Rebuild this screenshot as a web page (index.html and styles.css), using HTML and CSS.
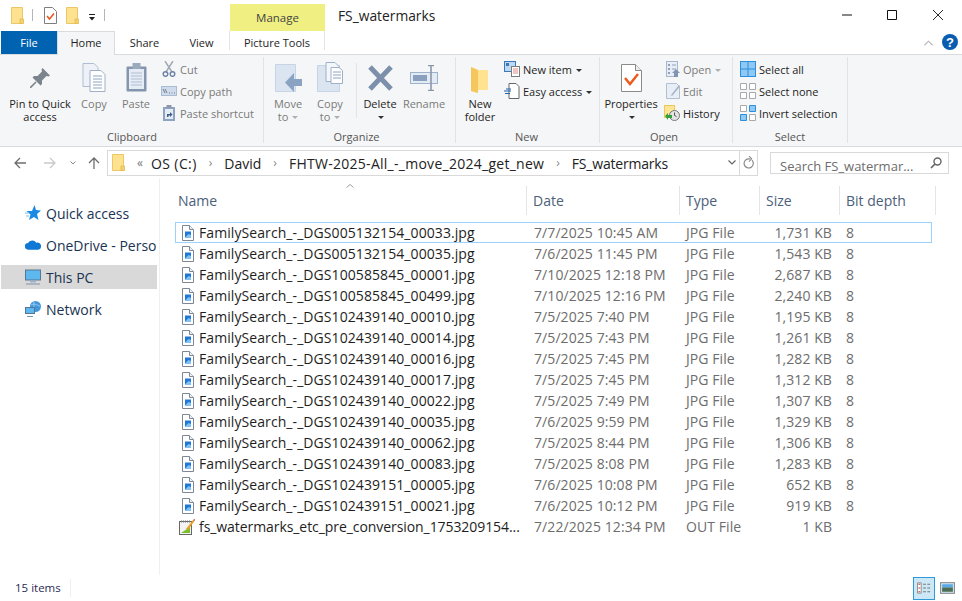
FILE: index.html
```html
<!DOCTYPE html>
<html>
  <head>
    <title>FS_watermarks</title>
    <link rel="stylesheet" href="styles.css">
  </head>
  <body>
    <svg class="defs" width="0" height="0">
      <symbol id="folder" viewBox="0 0 13 17">
        <path d="M.5.5h11v16H.5z" fill="#ffe28f" stroke="#ecc765"/>
        <path d="M9 12h3.500v4.500H9z" fill="#f4d271" stroke="#e3b94e" stroke-width=".8"/>
      </symbol>
      <symbol id="checkdoc" viewBox="0 0 13 17">
        <path d="M.5.5h8l4 4v12H.5z" fill="#fff" stroke="#7f7f7f"/>
        <path d="M3 9l2.500 3L10 6.500" fill="none" stroke="#e8541d" stroke-width="1.500"/>
      </symbol>
      <symbol id="jpg" viewBox="0 0 12 16">
        <path d="M.5.500h7l4 4v11H.500z" fill="#fff" stroke="#7e8794"/>
        <path d="M7.500.500v4h4" fill="#eef1f5" stroke="#7e8794"/>
        <rect x="3" y="6.500" width="6" height="6" fill="#1f78d8"/>
        <path d="M3 12.500l3.500-3.500 2.500 1v2.500z" fill="#7fc2f4"/>
      </symbol>
    </svg>

    <header class="titlebar">
      <div class="qat">
        <svg class="qat-icon"><use href="#folder"/></svg>
        <span class="qat-sep"></span>
        <svg class="qat-icon"><use href="#checkdoc"/></svg>
        <svg class="qat-icon qat-gap"><use href="#folder"/></svg>
        <svg class="qat-drop" viewBox="0 0 8 7"><path d="M1 .5h6" stroke="#222"/><path d="M1 3h6L4 6.500z" fill="#222"/></svg>
        <span class="qat-sep qat-sep-last"></span>
      </div>
      <div class="manage">Manage</div>
      <div class="window-title">FS_watermarks</div>
      <div class="window-controls">
        <svg viewBox="0 0 10 10" class="ctl-min"><path d="M0 5h10" stroke="#111"/></svg>
        <svg viewBox="0 0 10 10" class="ctl-max"><path d="M.5.500h9v9h-9z" fill="none" stroke="#111"/></svg>
        <svg viewBox="0 0 10 10" class="ctl-close"><path d="M0 0l10 10M10 0L0 10" stroke="#111" stroke-width=".9"/></svg>
      </div>
    </header>

    <nav class="tabs">
      <div class="tab tab-file">File</div>
      <div class="tab tab-home">Home</div>
      <div class="tab tab-share">Share</div>
      <div class="tab tab-view">View</div>
      <div class="tab tab-tools">Picture Tools</div>
      <svg class="ribbon-up" viewBox="0 0 10 6"><path d="M.5 5.500L5 1l4.500 4.500" fill="none" stroke="#b5b5b5" stroke-width="1.200"/></svg>
      <svg class="help" viewBox="0 0 16 16"><circle cx="8" cy="8" r="8" fill="#0a5cb0"/><text x="8" y="12.500" text-anchor="middle" class="help-q">?</text></svg>
    </nav>

    <section class="ribbon">
      <div class="group group-clipboard">
        <div class="group-body">
          <div class="big big-pin">
            <svg viewBox="0 0 20 20"><path d="M12.500 0L20 7.500l-1.500 1-2-.5-4.500 4.500V16l-1.500 1.500-8-8L4 8h3.500L12 3.500l-.5-2z" fill="#7c858e"/><path d="M6 14l-6 6" stroke="#7c858e" stroke-width="1.600"/></svg>
            <span>Pin to Quick<br>access</span>
          </div>
          <div class="big big-copy dim">
            <svg viewBox="0 0 24 29"><path d="M1 .5h11l4 4v19H1z" fill="#eef2f8" stroke="#aebdd2"/><path d="M8 7.500h11l4 4v17H8z" fill="#fff" stroke="#9fb0c8"/><path d="M11 13h9M11 16h9M11 19h9M11 22h9M11 25h9" stroke="#8ea4c2"/></svg>
            <span>Copy</span>
          </div>
          <div class="big big-paste dim">
            <svg viewBox="0 0 21 29"><rect x=".5" y="3.500" width="20" height="25" rx="1" fill="#8496ad"/><rect x="3" y="6" width="15" height="20" fill="#e6ecf5"/><path d="M5 10h11M5 13h11M5 16h11M5 19h11M5 22h11" stroke="#aebdd2"/><rect x="6.500" y="0" width="8" height="6" fill="#9aa9bb"/></svg>
            <span>Paste</span>
          </div>
          <div class="small-col col-cut">
            <div class="small dim">
              <svg viewBox="0 0 16 16"><path d="M4 0l7 11M12 0L5 11" stroke="#a3aab5" stroke-width="1.500"/><circle cx="4.500" cy="13" r="2.300" fill="none" stroke="#6f86a8" stroke-width="1.500"/><circle cx="11.500" cy="13" r="2.300" fill="none" stroke="#6f86a8" stroke-width="1.500"/></svg>
              <span>Cut</span>
            </div>
            <div class="small dim">
              <svg viewBox="0 0 16 16"><rect x=".5" y="3.500" width="15" height="9" fill="#cfdbec" stroke="#a9bbd4"/><path d="M2 6l2 4M4 6l2 4M8 10h1M10.500 10h1M13 10h1" stroke="#556666" stroke-width=".8"/></svg>
              <span>Copy path</span>
            </div>
            <div class="small dim">
              <svg viewBox="0 0 16 16"><rect x="2" y="2" width="12" height="14" fill="#8da3bf"/><rect x="4" y="4" width="8" height="10" fill="#e6ecf5"/><rect x="5.500" y="0" width="5" height="3" fill="#8c98a8"/><path d="M6 12V9h3V7l2.500 2.500L9 12v-1.500H7.500V12z" fill="#3f5f8a"/></svg>
              <span>Paste shortcut</span>
            </div>
          </div>
        </div>
        <div class="group-name">Clipboard</div>
      </div>

      <div class="group group-organize">
        <div class="group-body">
          <div class="big big-move dim">
            <svg viewBox="0 0 27 28"><path d="M.5.500h20v27H.5z" fill="#dbe5f2" stroke="#c6d4e6"/><path d="M19 15h8v7h-8v6l-9-9.500L19 9z" fill="#8aa3c3"/></svg>
            <span>Move<br>to <i class="caret"></i></span>
          </div>
          <div class="big big-copyto dim">
            <svg viewBox="0 0 26 30"><path d="M.5 3.500h22v26H.5z" fill="#dbe5f2" stroke="#c6d4e6"/><path d="M9 .5h9l4 4v15H9z" fill="#f3f6fa" stroke="#9fb0c8"/><path d="M14 5.500h8l3.500 3v13H14z" fill="#fff" stroke="#9fb0c8"/><path d="M16 10h8M16 13h8M16 16h8" stroke="#8ea4c2"/></svg>
            <span>Copy<br>to <i class="caret"></i></span>
          </div>
          <span class="inner-sep"></span>
          <div class="big big-delete">
            <svg viewBox="0 0 25 26"><path d="M2 2l21 22M23 2L2 24" stroke="#7d90ab" stroke-width="5"/></svg>
            <span>Delete<br><i class="caret caret-dark"></i></span>
          </div>
          <div class="big big-rename dim">
            <svg viewBox="0 0 28 26"><rect x=".5" y="7.500" width="27" height="11" fill="#e3ebf5" stroke="#9fb2cc"/><rect x="3" y="10" width="14" height="6" fill="#8aa0be"/><path d="M18 .5h6M18 25.500h6M21 1v24" stroke="#8b98aa" stroke-width="1.600"/></svg>
            <span>Rename</span>
          </div>
        </div>
        <div class="group-name">Organize</div>
      </div>

      <div class="group group-new">
        <div class="group-body">
          <div class="big big-folder">
            <svg viewBox="0 0 18 27"><path d="M0 1l7 3h10v20H7v3l-7-2z" fill="#ffe391"/><path d="M0 1l7 3v23l-7-2z" fill="#f4c65b"/></svg>
            <span>New<br>folder</span>
          </div>
          <div class="small-col col-newitem">
            <div class="small">
              <svg viewBox="0 0 16 16"><rect x=".5" y=".5" width="11" height="10" fill="#bcd8f2" stroke="#3b78b8"/><rect x="2" y="2" width="3" height="3" fill="#3b78b8"/><rect x="7.500" y="5.500" width="8" height="10" fill="#fff" stroke="#7b7b7b"/><path d="M9 8h5M9 10h5M9 12h5" stroke="#d9534f" stroke-width=".7"/></svg>
              <span>New item <i class="caret caret-dark"></i></span>
            </div>
            <div class="small">
              <svg viewBox="0 0 16 16"><path d="M5 .5h7l3 3v12H5z" fill="#fff" stroke="#666"/><path d="M0 8h7M1 10.500h5M2 6h5" stroke="#1a62b0" stroke-width="1.100"/></svg>
              <span>Easy access <i class="caret caret-dark"></i></span>
            </div>
          </div>
        </div>
        <div class="group-name">New</div>
      </div>

      <div class="group group-open">
        <div class="group-body">
          <div class="big big-props">
            <svg viewBox="0 0 21 28"><path d="M.5.500h14l6 6v21H.5z" fill="#fff" stroke="#8a8a8a"/><path d="M14.500.500v6h6" fill="#eee" stroke="#8a8a8a"/><path d="M4 14l5 6 8-10" fill="none" stroke="#ec5a1c" stroke-width="2.400"/></svg>
            <span>Properties<br><i class="caret caret-dark"></i></span>
          </div>
          <div class="small-col col-open">
            <div class="small dim">
              <svg viewBox="0 0 16 16"><rect x="2.500" y=".5" width="11" height="15" fill="#e9eef6" stroke="#a8b7cc"/><path d="M4 3h2v2H4zM4 7h2v2H4zM4 11h2v2H4z" fill="#8ea2bc"/><path d="M8 4h4M8 8h4" stroke="#8ea2bc"/><path d="M12 8l4 4h-2v4h-4v-4H8z" fill="#7f95b3"/></svg>
              <span>Open <i class="caret"></i></span>
            </div>
            <div class="small dim">
              <svg viewBox="0 0 16 16"><path d="M2.500.500h10l3 3v12h-13z" fill="#e9eef6" stroke="#b1bfd2"/><path d="M7 12l8-10 1 1.500L8 13z" fill="#a3b3c8"/></svg>
              <span>Edit</span>
            </div>
            <div class="small">
              <svg viewBox="0 0 16 16"><rect x=".5" y=".5" width="10" height="12" fill="#ffe596" stroke="#ebc75c"/><circle cx="10.500" cy="10.500" r="5" fill="#e4e4e4" stroke="#777"/><path d="M10.500 7.500v3l2 1" fill="none" stroke="#555"/><path d="M1 11l3-3v2h4v3H4v2z" fill="#32a03c"/></svg>
              <span>History</span>
            </div>
          </div>
        </div>
        <div class="group-name">Open</div>
      </div>

      <div class="group group-select">
        <div class="group-body">
          <div class="small-col col-select">
            <div class="small">
              <svg viewBox="0 0 16 16"><rect x=".5" y=".5" width="15" height="15" fill="#8fc8f5" stroke="#2a8fdc"/><path d="M8 0v16M0 8h16" stroke="#2a8fdc"/></svg>
              <span>Select all</span>
            </div>
            <div class="small">
              <svg viewBox="0 0 16 16"><path d="M.5.500h6v6h-6zM9.500.500h6v6h-6zM.5 9.500h6v6h-6zM9.500 9.500h6v6h-6z" fill="#fff" stroke="#a9a9a9"/></svg>
              <span>Select none</span>
            </div>
            <div class="small">
              <svg viewBox="0 0 16 16"><path d="M.5.500h6v6h-6zM9.500 9.500h6v6h-6z" fill="#fff" stroke="#a9a9a9"/><path d="M9.500.500h6v6h-6zM.5 9.500h6v6h-6z" fill="#8fc8f5" stroke="#2a8fdc"/></svg>
              <span>Invert selection</span>
            </div>
          </div>
        </div>
        <div class="group-name">Select</div>
      </div>
    </section>

    <div class="addressbar">
      <svg class="nav-back" viewBox="0 0 12 12"><path d="M12 6H1M6 1L1 6l5 5" fill="none" stroke="#6d6d6d" stroke-width="1.300"/></svg>
      <svg class="nav-fwd" viewBox="0 0 12 12"><path d="M0 6h11M6 1l5 5-5 5" fill="none" stroke="#c9c9c9" stroke-width="1.300"/></svg>
      <svg class="nav-down" viewBox="0 0 6 4"><path d="M.5.500L3 3 5.500.500" fill="none" stroke="#8a8a8a"/></svg>
      <svg class="nav-up" viewBox="0 0 12 12"><path d="M6 12V1M1 6l5-5 5 5" fill="none" stroke="#6d6d6d" stroke-width="1.300"/></svg>
      <div class="address">
        <svg class="address-folder"><use href="#folder"/></svg>
        <span class="crumb-more">«</span>
        <span class="crumb crumb-os">OS (C:)</span><span class="crumb-sep">›</span>
        <span class="crumb">David</span><span class="crumb-sep">›</span>
        <span class="crumb crumb-long">FHTW-2025-All_-_move_2024_get_new</span><span class="crumb-sep">›</span>
        <span class="crumb crumb-last">FS_watermarks</span>
        <svg class="address-drop" viewBox="0 0 8 5"><path d="M.5.500L4 4 7.500.500" fill="none" stroke="#666" stroke-width="1.200"/></svg>
        <span class="address-refresh">
          <svg viewBox="0 0 12 14"><path d="M9.800 4.500A5 5 0 1 1 6 3h2" fill="none" stroke="#8a8a8a" stroke-width="1.300"/><path d="M6.500 0l3 3-3 3" fill="none" stroke="#8a8a8a" stroke-width="1.100"/></svg>
        </span>
      </div>
      <div class="search">
        <span>Search FS_watermar...</span>
        <svg viewBox="0 0 12 12"><circle cx="7.500" cy="4.500" r="3.500" fill="none" stroke="#666" stroke-width="1.400"/><path d="M5 7l-4 4" stroke="#666" stroke-width="1.700"/></svg>
      </div>
    </div>

    <main class="content">
      <aside class="sidebar">
        <div class="nav-item">
          <svg viewBox="0 0 16 16"><path d="M9.500 0l1.500 5 5 .5-4 3.500 1.500 6-4.500-3-5 3 1.500-5.500L1.500 6H7z" fill="#1a8ae5"/><path d="M0 8h4M1 11h3" stroke="#7ab8ee"/></svg>
          <span>Quick access</span>
        </div>
        <div class="nav-item">
          <svg viewBox="0 0 17 10"><path d="M3.500 10a3.500 3.500 0 0 1-.3-7A5 5 0 0 1 12 2.500a3.800 3.800 0 0 1 5 4A3.500 3.500 0 0 1 14 10z" fill="#0f78d4"/></svg>
          <span>OneDrive - Perso</span>
        </div>
        <div class="nav-item nav-active">
          <svg viewBox="0 0 16 15"><rect x=".5" y=".5" width="15" height="10" fill="#5cb8ee" stroke="#5a7590"/><path d="M5 11h6v2H5z" fill="#9db2c6"/><path d="M1 14.500h14" stroke="#7d93a8"/></svg>
          <span>This PC</span>
        </div>
        <div class="nav-item">
          <svg viewBox="0 0 16 16"><circle cx="10.500" cy="5.500" r="5.500" fill="#3f97dc"/><path d="M6 4c3-2 6 0 9 1M9 1v10" stroke="#a9d7f5" stroke-width=".8" fill="none"/><rect x=".5" y="6.500" width="9" height="6" fill="#5cb8ee" stroke="#5a7590"/><path d="M2 15.500h6" stroke="#7d93a8"/></svg>
          <span>Network</span>
        </div>
      </aside>

      <div class="files">
        <div class="sort-caret"><svg viewBox="0 0 8 4"><path d="M.5 3.500L4 .5l3.500 3" fill="none" stroke="#a0a0a0"/></svg></div>
        <div class="columns">
          <div class="col col-name">Name</div>
          <div class="col col-date">Date</div>
          <div class="col col-type">Type</div>
          <div class="col col-size">Size</div>
          <div class="col col-bits">Bit depth</div>
        </div>
        <div class="rows">
          <div class="row row-focus"><svg class="file-icon"><use href="#jpg"/></svg><span class="name">FamilySearch_-_DGS005132154_00033.jpg</span><span class="date">7/7/2025 10:45 AM</span><span class="type">JPG File</span><span class="size">1,731 KB</span><span class="bits">8</span></div>
          <div class="row"><svg class="file-icon"><use href="#jpg"/></svg><span class="name">FamilySearch_-_DGS005132154_00035.jpg</span><span class="date">7/6/2025 11:45 PM</span><span class="type">JPG File</span><span class="size">1,543 KB</span><span class="bits">8</span></div>
          <div class="row"><svg class="file-icon"><use href="#jpg"/></svg><span class="name">FamilySearch_-_DGS100585845_00001.jpg</span><span class="date">7/10/2025 12:18 PM</span><span class="type">JPG File</span><span class="size">2,687 KB</span><span class="bits">8</span></div>
          <div class="row"><svg class="file-icon"><use href="#jpg"/></svg><span class="name">FamilySearch_-_DGS100585845_00499.jpg</span><span class="date">7/10/2025 12:16 PM</span><span class="type">JPG File</span><span class="size">2,240 KB</span><span class="bits">8</span></div>
          <div class="row"><svg class="file-icon"><use href="#jpg"/></svg><span class="name">FamilySearch_-_DGS102439140_00010.jpg</span><span class="date">7/5/2025 7:40 PM</span><span class="type">JPG File</span><span class="size">1,195 KB</span><span class="bits">8</span></div>
          <div class="row"><svg class="file-icon"><use href="#jpg"/></svg><span class="name">FamilySearch_-_DGS102439140_00014.jpg</span><span class="date">7/5/2025 7:43 PM</span><span class="type">JPG File</span><span class="size">1,261 KB</span><span class="bits">8</span></div>
          <div class="row"><svg class="file-icon"><use href="#jpg"/></svg><span class="name">FamilySearch_-_DGS102439140_00016.jpg</span><span class="date">7/5/2025 7:45 PM</span><span class="type">JPG File</span><span class="size">1,282 KB</span><span class="bits">8</span></div>
          <div class="row"><svg class="file-icon"><use href="#jpg"/></svg><span class="name">FamilySearch_-_DGS102439140_00017.jpg</span><span class="date">7/5/2025 7:45 PM</span><span class="type">JPG File</span><span class="size">1,312 KB</span><span class="bits">8</span></div>
          <div class="row"><svg class="file-icon"><use href="#jpg"/></svg><span class="name">FamilySearch_-_DGS102439140_00022.jpg</span><span class="date">7/5/2025 7:49 PM</span><span class="type">JPG File</span><span class="size">1,307 KB</span><span class="bits">8</span></div>
          <div class="row"><svg class="file-icon"><use href="#jpg"/></svg><span class="name">FamilySearch_-_DGS102439140_00035.jpg</span><span class="date">7/6/2025 9:59 PM</span><span class="type">JPG File</span><span class="size">1,329 KB</span><span class="bits">8</span></div>
          <div class="row"><svg class="file-icon"><use href="#jpg"/></svg><span class="name">FamilySearch_-_DGS102439140_00062.jpg</span><span class="date">7/5/2025 8:44 PM</span><span class="type">JPG File</span><span class="size">1,306 KB</span><span class="bits">8</span></div>
          <div class="row"><svg class="file-icon"><use href="#jpg"/></svg><span class="name">FamilySearch_-_DGS102439140_00083.jpg</span><span class="date">7/5/2025 8:08 PM</span><span class="type">JPG File</span><span class="size">1,283 KB</span><span class="bits">8</span></div>
          <div class="row"><svg class="file-icon"><use href="#jpg"/></svg><span class="name">FamilySearch_-_DGS102439151_00005.jpg</span><span class="date">7/6/2025 10:08 PM</span><span class="type">JPG File</span><span class="size">652 KB</span><span class="bits">8</span></div>
          <div class="row"><svg class="file-icon"><use href="#jpg"/></svg><span class="name">FamilySearch_-_DGS102439151_00021.jpg</span><span class="date">7/6/2025 10:12 PM</span><span class="type">JPG File</span><span class="size">919 KB</span><span class="bits">8</span></div>
          <div class="row"><svg class="file-icon file-out" viewBox="0 0 16 16"><rect x=".5" y="2.500" width="12" height="13" fill="#f4f4f4" stroke="#666"/><path d="M2 14h9V8z" fill="#7ebf2e"/><path d="M2 2.500h9" stroke="#777" stroke-dasharray="1 1" stroke-width="2"/><path d="M7 10l7-9 1.500 1L9 11z" fill="#e8a020"/><path d="M14 1l1.500 1L16 0z" fill="#b02a2a"/></svg><span class="name name-cut">fs_watermarks_etc_pre_conversion_1753209154...</span><span class="date">7/22/2025 12:34 PM</span><span class="type">OUT File</span><span class="size">1 KB</span><span class="bits"></span></div>
        </div>
      </div>
    </main>

    <footer class="statusbar">
      <span class="status-text">15 items</span>
      <div class="views">
        <div class="view-btn view-on">
          <svg viewBox="0 0 16 12"><path d="M.5.500h4v11h-4z" fill="#fff" stroke="#8d8d8d"/><path d="M1.500 2h2M1.500 6h2M1.500 10h2" stroke="#aa3333"/><path d="M6.500 2h3M11 2h3M6.500 6h3M11 6h3M6.500 10h3M11 10h3" stroke="#777" stroke-width="1.200"/></svg>
        </div>
        <div class="view-btn">
          <svg viewBox="0 0 14 11"><rect x=".5" y=".5" width="13" height="10" fill="#cfe4f6" stroke="#8d8d8d"/><rect x="2" y="2" width="10" height="3" fill="#5aaae6"/><rect x="2" y="5" width="10" height="4" fill="#4d6e52"/></svg>
        </div>
      </div>
    </footer>
  </body>
</html>
```

FILE: styles.css
```css
html, body {
  margin: 0;
  height: 601px;
  overflow: hidden;
}

body {
  font-family: "Open Sans", "Noto Sans", sans-serif;
  font-size: 11px;
  color: #1e1e1e;
  background: #fff;
  display: flex;
  flex-direction: column;
}

.defs {
  position: absolute;
}

svg {
  display: block;
  flex: none;
}

/* title row */

.titlebar {
  height: 31px;
  display: flex;
  align-items: flex-end;
}

.qat {
  width: 230px;
  height: 31px;
  padding: 7px 0 0 11px;
  box-sizing: border-box;
  display: flex;
  align-items: flex-start;
}

.qat-icon {
  width: 13px;
  height: 17px;
}

.qat-gap {
  margin-left: 9px;
}

.qat-sep {
  width: 1px;
  height: 12px;
  margin: 2px 11px 0 8px;
  background: #b5b5b5;
}

.qat-sep-last {
  margin-left: 8px;
}

.qat-drop {
  width: 8px;
  height: 7px;
  margin: 7px 0 0 9px;
}

.manage {
  width: 95px;
  height: 27px;
  background: #f0ef82;
  color: #444;
  font-size: 11.500px;
  line-height: 28px;
  text-align: center;
}

.window-title {
  margin-left: 13px;
  align-self: flex-start;
  padding-top: 6px;
  font-size: 13.800px;
  line-height: 20px;
  color: #222;
}

.window-controls {
  margin-left: auto;
  height: 31px;
  display: flex;
  align-items: flex-start;
  padding: 10px 19px 0 0;
  box-sizing: border-box;
}

.window-controls svg {
  width: 10px;
  height: 10px;
}

.ctl-min {
  margin-right: 35px;
}

.ctl-max {
  margin-right: 36px;
}

/* tabs */

.tabs {
  height: 23px;
  display: flex;
  position: relative;
  border-bottom: 1px solid #dadbdc;
  box-sizing: content-box;
}

.tab {
  height: 23px;
  line-height: 23px;
  text-align: center;
  font-size: 11px;
  box-sizing: border-box;
}

.tab-file {
  width: 56px;
  margin-left: 1px;
  line-height: 24px;
  background: #0063b1;
  color: #fff;
}

.tab-home {
  width: 58px;
  height: 24px;
  line-height: 22px;
  border: 1px solid #dadbdc;
  border-bottom: 0;
  background: #f5f6f7;
  position: relative;
}

.tab-share {
  width: 59px;
}

.tab-view {
  width: 55px;
}

.tab-tools {
  width: 96px;
  height: 19px;
  line-height: 24px;
  border: 1px solid #e3e3e3;
  border-top: 0;
  border-bottom: 0;
}

.ribbon-up {
  position: absolute;
  left: 924px;
  top: 9px;
  width: 9px;
  height: 6px;
}

.help {
  position: absolute;
  left: 942px;
  top: 3px;
  width: 16px;
  height: 16px;
}

.help-q {
  font-family: "Liberation Sans", sans-serif;
  font-size: 13px;
  font-weight: bold;
  fill: #fff;
}

/* ribbon */

.ribbon {
  height: 92px;
  background: #f5f6f7;
  border-bottom: 1px solid #dadbdc;
  padding: 2px 0 0 1px;
  box-sizing: border-box;
  display: flex;
}

.group {
  height: 86px;
  border-right: 1px solid #e1e3e6;
  box-sizing: border-box;
  display: flex;
  flex-direction: column;
}

.group-clipboard { width: 263px; }
.group-organize { width: 192px; }
.group-new { width: 144px; }
.group-open { width: 133px; }
.group-select { width: 115px; }

.group-body {
  height: 72px;
  padding-top: 1px;
  box-sizing: border-box;
  display: flex;
  flex: none;
}

.group-name {
  text-align: center;
  color: #555;
  line-height: 16px;
}

.group-organize .group-name { padding-right: 6px; }
.group-new .group-name { padding-right: 2px; }
.group-open .group-name { padding-right: 4px; }

.big {
  display: flex;
  flex-direction: column;
  align-items: center;
  text-align: center;
  line-height: 13px;
  flex: none;
}

.dim {
  color: #7a7a7a;
}

.big-pin { width: 78px; }
.big-pin svg { width: 20px; height: 20px; margin: 10px 0 9px; }
.big-copy { width: 30px; margin-right: 6px; }
.big-copy svg { width: 24px; height: 29px; margin: 5px 0; }
.big-paste { width: 42px; margin-right: 4px; }
.big-paste svg { width: 21px; height: 29px; margin: 5px 0; }

.big-move { width: 46px; margin-left: 1px; }
.big-move svg { width: 27px; height: 28px; margin: 6px 0 5px; }
.big-copyto { width: 38px; }
.big-copyto svg { width: 26px; height: 30px; margin: 4px 0 5px; }

.inner-sep {
  width: 1px;
  height: 55px;
  margin: 5px 0 0 7px;
  background: #e1e3e6;
}

.big-delete { width: 46px; }
.big-delete svg { width: 25px; height: 26px; margin: 7px 0 6px; }
.big-rename { width: 42px; }
.big-rename svg { width: 28px; height: 26px; margin: 7px 0 6px; }

.big-folder { width: 48px; }
.big-folder svg { width: 18px; height: 27px; margin: 8px 0 4px; }

.big-props { width: 60px; margin-left: 1px; }
.big-props svg { width: 21px; height: 28px; margin: 6px 0 5px; }

.small-col {
  display: flex;
  flex-direction: column;
}

.small {
  height: 22px;
  display: flex;
  align-items: center;
  gap: 3px;
  white-space: nowrap;
}

.small svg {
  width: 16px;
  height: 16px;
}

.col-open { margin-left: 3px; }
.col-select { margin-left: 7px; }

.caret {
  display: inline-block;
  width: 0;
  height: 0;
  border: 3px solid transparent;
  border-top: 3px solid #b0b0b0;
  border-bottom: 0;
  vertical-align: 2px;
  margin-left: 1px;
}

.caret-dark {
  border-top-color: #333;
}

/* address bar */

.addressbar {
  height: 31px;
  display: flex;
  align-items: center;
  position: relative;
}

.nav-back { width: 12px; height: 12px; margin-left: 14px; }
.nav-fwd { width: 12px; height: 12px; margin-left: 18px; }
.nav-down { width: 6px; height: 4px; margin-left: 14px; }
.nav-up { width: 12px; height: 12px; margin-left: 12px; }

.address {
  width: 651px;
  height: 26px;
  margin: 0 0 0 7px;
  border: 1px solid #d9d9d9;
  box-sizing: border-box;
  display: flex;
  align-items: center;
  font-size: 14px;
  color: #222;
  white-space: nowrap;
}

.address-folder {
  width: 13px;
  height: 17px;
  margin-left: 4px;
}

.crumb {
  padding-top: 2px;
}

.crumb-os {
  letter-spacing: .4px;
}

.crumb-long {
  letter-spacing: .27px;
}

.crumb-last {
  letter-spacing: -.2px;
}

.crumb-more {
  margin: 0 8px 0 12px;
  color: #777;
  font-size: 12px;
}

.crumb-sep {
  margin: 0 12px;
  color: #888;
  font-size: 12px;
}

.address-drop {
  width: 8px;
  height: 5px;
  margin-left: auto;
}

.address-refresh {
  width: 17px;
  height: 24px;
  margin-left: 3px;
  border-left: 1px solid #d9d9d9;
  display: flex;
  align-items: center;
  justify-content: center;
}

.address-refresh svg {
  width: 11px;
  height: 13px;
}

.search {
  width: 179px;
  height: 22px;
  margin-left: 12px;
  border: 1px solid #d9d9d9;
  box-sizing: border-box;
  display: flex;
  justify-content: space-between;
  padding: 0 6px 0 9px;
  overflow: hidden;
  font-size: 13px;
  color: #6d6d6d;
  line-height: 26px;
  white-space: nowrap;
}

.search svg {
  width: 12px;
  height: 12px;
  margin-top: 4px;
}

/* main */

.content {
  flex: 1;
  display: flex;
  min-height: 0;
}

.sidebar {
  width: 160px;
  border-right: 1px solid #f0f0f0;
  box-sizing: border-box;
  padding-top: 23px;
  flex: none;
}

.nav-item {
  height: 24px;
  margin: 0 2px 8px 1px;
  padding-left: 24px;
  display: flex;
  align-items: center;
  gap: 5px;
  font-size: 14px;
  color: #1a3352;
  white-space: nowrap;
}

.nav-item svg {
  width: 16px;
  height: 16px;
}

.nav-active {
  background: #d9d9d9;
}

.files {
  flex: 1;
  position: relative;
}

.sort-caret {
  position: absolute;
  left: 186px;
  top: 6px;
}

.sort-caret svg {
  width: 8px;
  height: 4px;
}

.columns {
  height: 44px;
  display: flex;
  box-sizing: border-box;
  padding-top: 8px;
  font-size: 14px;
  color: #4c607a;
}

.col {
  height: 29px;
  line-height: 29px;
  padding-left: 6px;
  box-sizing: border-box;
  border-right: 1px solid #e5e5e5;
}

.col-name { width: 367px; padding-left: 18px; }
.col-date { width: 153px; }
.col-type { width: 80px; }
.col-size { width: 80px; }
.col-bits { width: 96px; }

.rows {
  display: flex;
  flex-direction: column;
}

.row {
  width: 757px;
  height: 21px;
  margin-left: 15px;
  padding-left: 7px;
  box-sizing: border-box;
  display: flex;
  align-items: center;
  font-size: 14px;
  letter-spacing: .08px;
  white-space: nowrap;
}

.row-focus {
  box-shadow: inset 0 0 0 1px #99d1ff;
}

.file-icon {
  width: 12px;
  height: 16px;
  margin-right: 5px;
}

.file-out {
  width: 16px;
  margin: 0 4px 0 -3px;
}

.name {
  width: 335px;
  color: #1e1e1e;
}

.name-cut {
  letter-spacing: -.07px;
}

.date, .type, .size, .bits {
  color: #6d6d6d;
}

.date { width: 152px; }
.type { width: 75px; }
.size { width: 71px; text-align: right; }
.bits { margin-left: 14px; }

/* status bar */

.statusbar {
  height: 26px;
  display: flex;
  align-items: center;
  padding-left: 15px;
  font-size: 11.500px;
  color: #2b2b55;
  position: relative;
}

.status-text {
  padding-right: 9px;
  border-right: 1px solid #f0f0f0;
  line-height: 18px;
}

.views {
  margin-left: auto;
  margin-right: 4px;
  display: flex;
  gap: 1px;
}

.view-btn {
  width: 22px;
  height: 23px;
  box-sizing: border-box;
  display: flex;
  align-items: center;
  justify-content: center;
}

.view-btn svg {
  width: 15px;
  height: 12px;
}

.view-on {
  background: #cce8f7;
  border: 1px solid #2f9ad8;
}
```
